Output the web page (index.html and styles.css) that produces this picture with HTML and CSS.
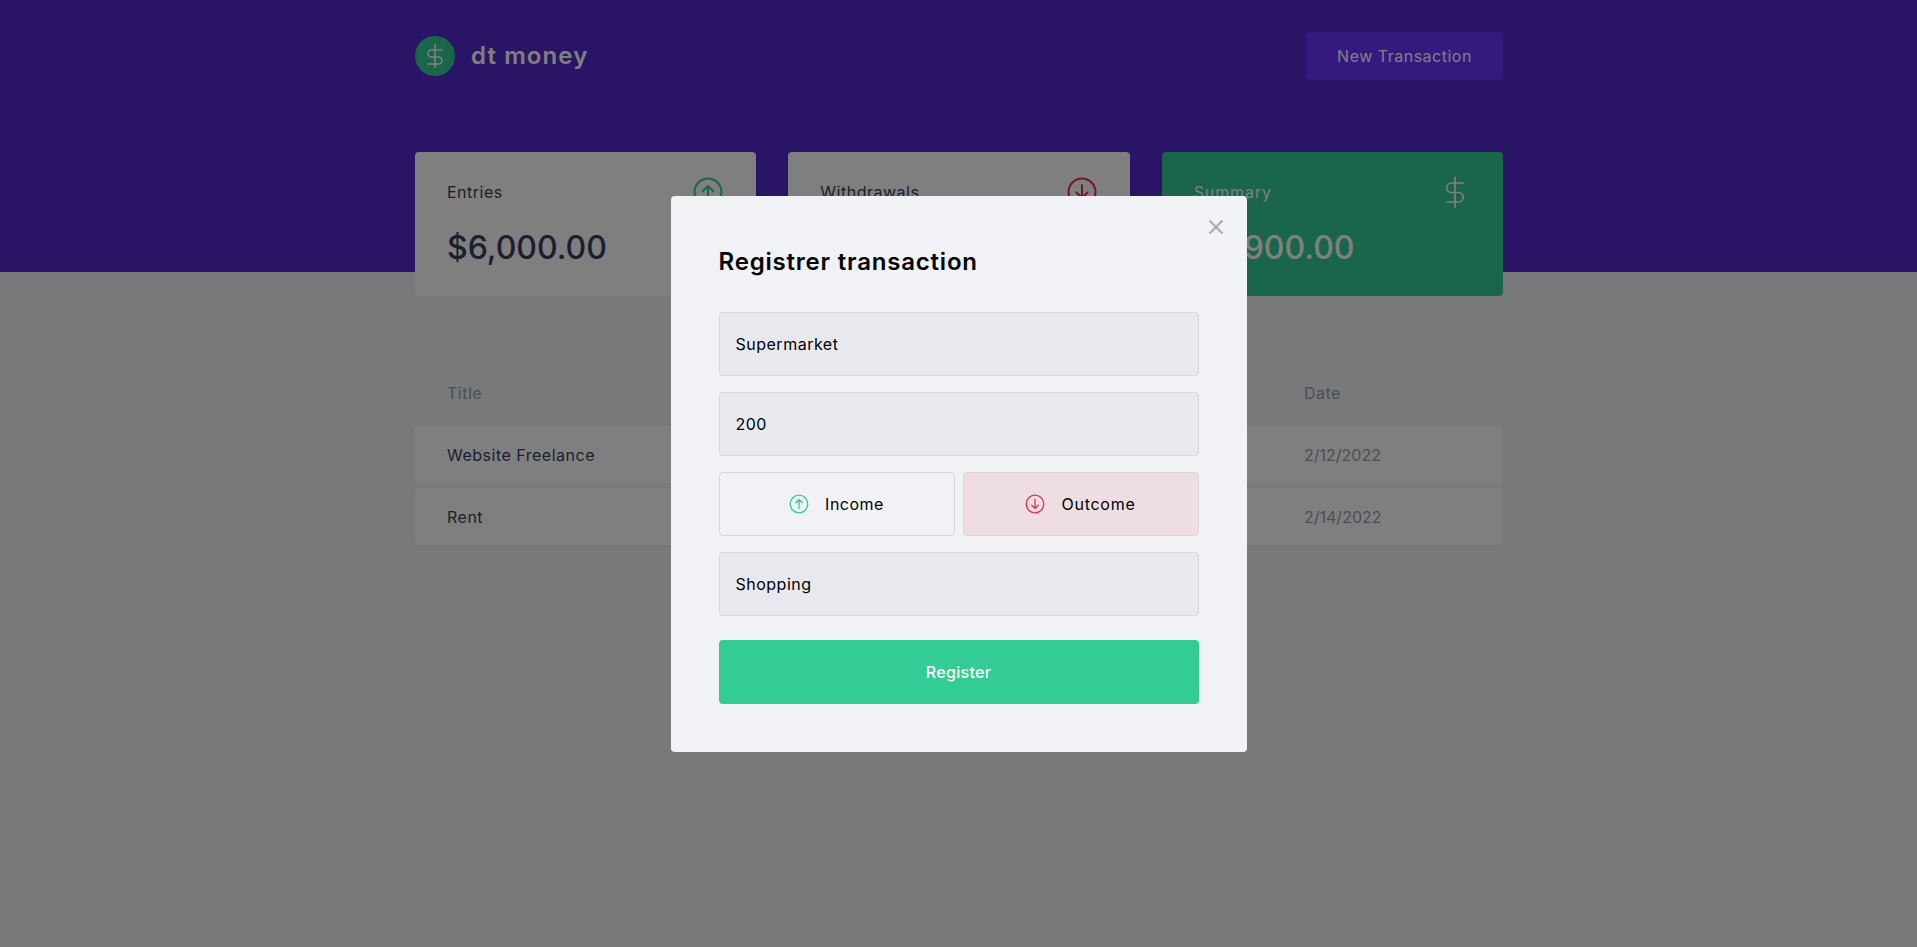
FILE: index.html
```html
<!DOCTYPE html>
<html lang="en">
<head>
<meta charset="utf-8">
<title>dt money</title>
<link rel="stylesheet" href="styles.css">
</head>
<body>
<header class="header">
  <div class="container header-row">
    <div class="brand">
      <svg class="logo" viewBox="0 0 40 40"><circle cx="20" cy="20" r="20" fill="#33cc95"/><path d="M20 8.500v23M27 14H16.500a3.500 3.500 0 0 0 0 7h7a3.500 3.500 0 0 1 0 7H13" fill="none" stroke="#fff" stroke-width="1.600" stroke-linecap="round" stroke-linejoin="round"/></svg>
      <span class="brand-name">dt money</span>
    </div>
    <button class="new-btn">New Transaction</button>
  </div>
</header>
<main class="container">
  <section class="summary">
    <div class="card">
      <div class="card-top"><span>Entries</span>
        <svg class="card-icon" viewBox="0 0 32 32" fill="none" stroke="#33cc95" stroke-width="2" stroke-linecap="round" stroke-linejoin="round"><circle cx="16" cy="16" r="13.500"/><path d="M16 23V10M10.500 15.500 16 10l5.500 5.500"/></svg>
      </div>
      <strong class="amount">$6,000.00</strong>
    </div>
    <div class="card">
      <div class="card-top"><span>Withdrawals</span>
        <svg class="card-icon" viewBox="0 0 32 32" fill="none" stroke="#e52e4d" stroke-width="2" stroke-linecap="round" stroke-linejoin="round"><circle cx="16" cy="16" r="13.500"/><path d="M16 9v13M10.500 16.500 16 22l5.500-5.500"/></svg>
      </div>
    </div>
    <div class="card card-total">
      <div class="card-top"><span class="label-total">Summary</span>
        <svg class="card-icon" viewBox="0 0 32 32" fill="none" stroke="#fff" stroke-width="1.700" stroke-linecap="round" stroke-linejoin="round"><path d="M16 1v30M24 7H12.500a4.750 4.750 0 0 0 0 9.500h7a4.750 4.750 0 0 1 0 9.500H8"/></svg>
      </div>
      <strong class="amount">$4,900.00</strong>
    </div>
  </section>
  <table class="transactions">
    <thead>
      <tr><th>Title</th><th></th><th></th><th>Date</th></tr>
    </thead>
    <tbody>
      <tr><td class="strong">Website Freelance</td><td></td><td></td><td class="date">2/12/2022</td></tr>
      <tr><td class="strong">Rent</td><td></td><td></td><td class="date">2/14/2022</td></tr>
    </tbody>
  </table>
</main>
<div class="overlay">
  <form class="modal">
    <button type="button" class="close" aria-label="Close">
      <svg viewBox="0 0 14 14" fill="none" stroke="#a8a9ae" stroke-width="2"><path d="M.5.500l13 13M13.500.500l-13 13"/></svg>
    </button>
    <h2 class="modal-title">Registrer transaction</h2>
    <input class="field" value="Supermarket">
    <input class="field" value="200">
    <div class="types">
      <button type="button" class="type">
        <svg class="type-icon" viewBox="0 0 20 20" fill="none" stroke="#33cc95" stroke-width="1.300" stroke-linecap="round" stroke-linejoin="round"><circle cx="10" cy="10" r="8.800"/><path d="M10 14.500v-9M6.800 8.700 10 5.500l3.200 3.200"/></svg>
        <span>Income</span>
      </button>
      <button type="button" class="type type-active">
        <svg class="type-icon" viewBox="0 0 20 20" fill="none" stroke="#e52e4d" stroke-width="1.300" stroke-linecap="round" stroke-linejoin="round"><circle cx="10" cy="10" r="8.800"/><path d="M10 5.500v9M6.800 11.300l3.200 3.200 3.200-3.200"/></svg>
        <span class="label-outcome">Outcome</span>
      </button>
    </div>
    <input class="field" value="Shopping">
    <button type="button" class="submit">Register</button>
  </form>
</div>
</body>
</html>
```
FILE: styles.css
```css
* { margin: 0; padding: 0; box-sizing: border-box; }
html, body { height: 100%; }
body {
  background: #f0f2f5;
  font-family: "Inter", "Liberation Sans", sans-serif;
  font-size: 16px;
  line-height: 24px;
  color: #363f5f;
  letter-spacing: 0.5px;
  overflow: hidden;
}
button, input { font: inherit; letter-spacing: inherit; }
.container { width: 1088px; margin-left: 415px; }
.header { background: #5429cc; height: 272px; padding-top: 32px; }
.header-row { display: flex; justify-content: space-between; align-items: center; }
.brand { display: flex; align-items: center; gap: 16px; }
.logo { width: 40px; height: 40px; display: block; }
.brand-name { color: #fff; font-size: 24px; font-weight: 600; letter-spacing: 1.1px; }
.new-btn {
  width: 197px; height: 48px; border: 0; border-radius: 4px;
  background: #6933ff; color: #fff;
}
.summary {
  display: grid; grid-template-columns: repeat(3, 1fr); gap: 32px;
  margin-top: -120px;
}
.card { background: #fff; border-radius: 4px; padding: 24px 32px; height: 144px; }
.card-top { display: flex; justify-content: space-between; align-items: center; height: 32px; }
.card-icon { width: 32px; height: 32px; display: block; }
.label-total { letter-spacing: 0.9px; }
.amount { display: inline-block; margin-top: 16px; font-size: 32px; line-height: 48px; font-weight: 500; letter-spacing: 0; }
.card-total { background: #33cc95; color: #fff; }
.transactions { width: 100%; margin-top: 64px; border-collapse: separate; border-spacing: 0 5px; table-layout: fixed; }
.transactions th:nth-child(1) { width: 400px; }
.transactions th:nth-child(4) { width: 231px; }
.transactions th { padding: 16px 32px; height: 56px; text-align: left; font-weight: 400; color: #969cb3; }
.transactions td { padding: 16px 32px; height: 57px; background: #fff; color: #969cb3; }
.transactions td:first-child { border-radius: 4px 0 0 4px; }
.transactions td:last-child { border-radius: 0 4px 4px 0; }
.transactions td.strong { color: #363f5f; }
.transactions td.date { letter-spacing: 0; }
.overlay {
  position: fixed; top: 0; right: 0; bottom: 0; left: 0;
  background: rgba(0, 0, 0, 0.5);
  display: flex; align-items: center; justify-content: center;
}
.modal {
  position: relative; width: 576px; padding: 48px;
  background: #f0f2f5; border-radius: 4px;
  display: flex; flex-direction: column; gap: 16px;
}
.close { position: absolute; top: 24px; right: 24px; width: 14px; height: 14px; border: 0; background: none; }
.close svg { display: block; width: 14px; height: 14px; overflow: visible; }
.modal-title { color: #000; font-size: 24px; line-height: 36px; font-weight: 600; margin-bottom: 16px; letter-spacing: 0.8px; }
.field {
  display: block; width: 100%; height: 64px; padding: 0 16px;
  background: #e7e9ee; border: 1px solid #d7d7d7; border-radius: 4px;
  color: #000;
}
.types { display: grid; grid-template-columns: 1fr 1fr; gap: 8px; }
.type {
  height: 64px; background: transparent; border: 1px solid #d7d7d7; border-radius: 4px;
  display: flex; align-items: center; justify-content: center; gap: 16px; color: #000;
}
.type-active { background: rgba(229, 46, 77, 0.1); }
.label-outcome { letter-spacing: 0.75px; }
.type-icon { width: 20px; height: 20px; display: block; }
.submit {
  height: 64px; margin-top: 8px; border: 0; border-radius: 4px;
  background: #33cc95; color: #fff; font-weight: 500; letter-spacing: 0.3px;
}
```
